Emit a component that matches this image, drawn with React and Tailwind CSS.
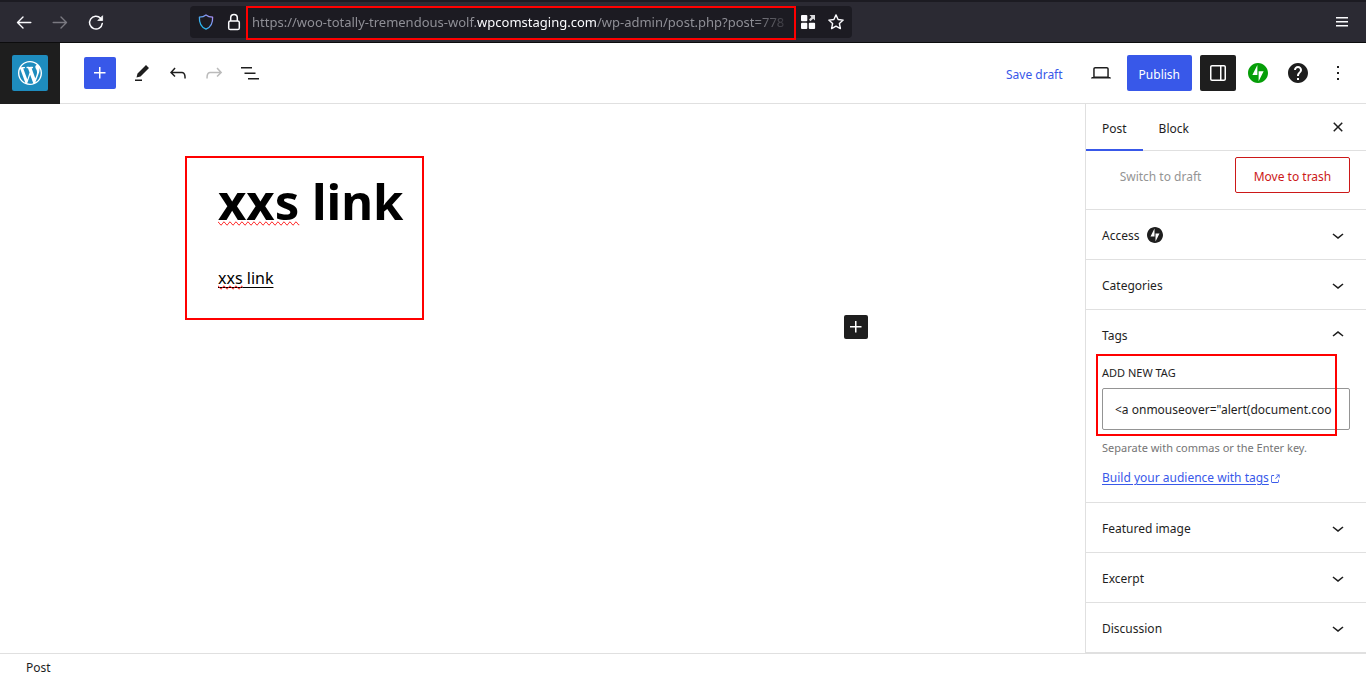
import React from "react";

const paths = {
  wordpress:
    "M20 10c0-5.51-4.49-10-10-10C4.48 0 0 4.49 0 10c0 5.52 4.48 10 10 10 5.51 0 10-4.48 10-10zM7.78 15.37L4.37 6.22c.55-.02 1.17-.08 1.17-.08.5-.06.44-1.13-.06-1.11 0 0-1.45.11-2.37.11-.18 0-.37 0-.58-.01C4.12 2.69 6.87 1.11 10 1.11c2.33 0 4.45.87 6.05 2.34-.68-.11-1.65.39-1.65 1.58 0 .74.45 1.36.9 2.1.35.61.55 1.36.55 2.46 0 1.49-1.4 5-1.4 5l-3.03-8.37c.54-.02.82-.17.82-.17.5-.05.44-1.25-.06-1.22 0 0-1.44.12-2.38.12-.87 0-2.33-.12-2.33-.12-.5-.03-.56 1.2-.06 1.22l.92.08 1.26 3.41zM17.41 10c.24-.64.74-1.87.43-4.25.7 1.29 1.05 2.71 1.05 4.25 0 3.29-1.73 6.24-4.4 7.78.97-2.59 1.94-5.2 2.92-7.78zM6.1 18.09C3.12 16.65 1.11 13.53 1.11 10c0-1.3.23-2.48.72-3.59C3.25 10.3 4.67 14.2 6.1 18.09zm4.03-6.63l2.58 6.98c-.86.29-1.76.45-2.71.45-.79 0-1.57-.11-2.29-.33.81-2.38 1.62-4.74 2.42-7.1z",
  plus: "M11 12.5V17.5H12.5V12.5H17.5V11H12.5V6H11V11H6V12.5H11Z",
  edit: "m19 7-3-3-8.5 8.5-1 4 4-1L19 7Zm-7 11.5H5V20h7v-1.5Z",
  undo: "M18.3 11.7c-.6-.6-1.4-.9-2.3-.9H6.7l2.9-3.3-1.1-1-4.5 5L8.5 16l1-1-2.7-2.7H16c.5 0 .9.2 1.3.5 1 1 1 3.4 1 4.5v.3h1.5v-.2c0-1.5 0-4.3-1.5-5.7z",
  redo: "M15.6 6.5l-1.1 1 2.9 3.3H8c-.9 0-1.7.3-2.3.9-1.4 1.5-1.4 4.2-1.4 5.6v.2h1.5v-.3c0-1.1 0-3.5 1-4.5.3-.3.7-.5 1.3-.5h9.2L14.5 15l1.1 1.1 4.6-4.6-4.6-5z",
  list: "M3 6h11v1.5H3V6Zm3.5 5.5h11V13h-11v-1.5ZM21 17H10v1.5h11V17Z",
  desktop:
    "M20.5 16h-.7V8c0-1.1-.9-2-2-2H6.2c-1.1 0-2 .9-2 2v8h-.7c-.8 0-1.5.7-1.5 1.5h20c0-.8-.7-1.5-1.5-1.5zM5.7 8c0-.3.2-.5.5-.5h11.6c.3 0 .5.2.5.5v7.6H5.7V8z",
  drawer:
    "M18 4H6c-1.1 0-2 .9-2 2v12c0 1.1.9 2 2 2h12c1.1 0 2-.9 2-2V6c0-1.1-.9-2-2-2zm-4 14.5H6c-.3 0-.5-.2-.5-.5V6c0-.3.2-.5.5-.5h8v13zm4.5-.5c0 .3-.2.5-.5.5h-2.5v-13H18c.3 0 .5.2.5.5v12z",
  help: "M12 2C6.48 2 2 6.48 2 12s4.48 10 10 10 10-4.48 10-10S17.52 2 12 2zm1 17h-2v-2h2v2zm2.07-7.75l-.9.92C13.45 12.9 13 13.5 13 15h-2v-.5c0-1.1.45-2.1 1.17-2.83l1.24-1.26c.37-.36.59-.86.59-1.41 0-1.1-.9-2-2-2s-2 .9-2 2H8c0-2.21 1.79-4 4-4s4 1.79 4 4c0 .88-.36 1.68-.93 2.25z",
  more: "M13 19h-2v-2h2v2zm0-6h-2v-2h2v2zm0-6h-2V5h2v2z",
  down: "M17.5 11.6L12 16l-5.5-4.4.9-1.2L12 14l4.5-3.6 1 1.2z",
  up: "M6.5 12.4L12 8l5.5 4.4-.9 1.2L12 10l-4.5 3.6-1-1.2z",
  close:
    "M12 13.06l3.712 3.713 1.061-1.06L13.061 12l3.712-3.712-1.06-1.06L12 10.938 8.288 7.227l-1.061 1.06L10.939 12l-3.712 3.712 1.06 1.061L12 13.061z",
  external:
    "M18.2 17c0 .7-.6 1.2-1.2 1.2H7c-.7 0-1.2-.6-1.2-1.2V7c0-.7.6-1.2 1.2-1.2h3.2V4.2H7C5.5 4.2 4.2 5.5 4.2 7v10c0 1.5 1.2 2.8 2.8 2.8h10c1.5 0 2.8-1.2 2.8-2.8v-3.6h-1.5V17zM14.9 3v1.5h3.7l-6.4 6.4 1.1 1.1 6.4-6.4v3.7h1.5V3h-6.3z",
};

function Icon({ name, className = "size-6" }) {
  return (
    <svg viewBox="0 0 24 24" fill="currentColor" className={className} aria-hidden="true">
      <path d={paths[name]} />
    </svg>
  );
}

function Jetpack({ className }) {
  return (
    <svg viewBox="0 0 32 32" fill="currentColor" className={className} aria-hidden="true">
      <path d="M16,0C7.2,0,0,7.2,0,16s7.2,16,16,16s16-7.2,16-16S24.8,0,16,0z M15,19H7l8-16V19z M17,29V13h8L17,29z" />
    </svg>
  );
}

function IconButton({ label, className = "", children }) {
  return (
    <button type="button" aria-label={label} className={`flex size-9 shrink-0 items-center justify-center rounded-xs ${className}`}>
      {children}
    </button>
  );
}

function BrowserBar() {
  return (
    <div className="flex h-[43px] shrink-0 items-center border-t-2 border-b border-t-[#1c1b22] border-b-[#0c0c0d] bg-[#2b2a33] pr-3 pl-3 text-[#fbfbfe]">
      <div className="flex items-center gap-3">
        <button type="button" aria-label="Back" className="flex size-6 items-center justify-center">
          <svg viewBox="0 0 16 16" className="size-4" fill="none" stroke="currentColor" strokeWidth="1.4" strokeLinecap="round" strokeLinejoin="round"><path d="M14.8 8.5H1.5M7 3L1.5 8.5L7 14" /></svg>
        </button>
        <button type="button" aria-label="Forward" className="flex size-6 items-center justify-center text-[#7a7981]">
          <svg viewBox="0 0 16 16" className="size-4" fill="none" stroke="currentColor" strokeWidth="1.4" strokeLinecap="round" strokeLinejoin="round"><path d="M1.2 8.5H14.5M9 3L14.5 8.5L9 14" /></svg>
        </button>
        <button type="button" aria-label="Reload" className="flex size-6 items-center justify-center">
          <svg viewBox="0 0 16 16" className="size-4 overflow-visible" fill="none" stroke="currentColor" strokeWidth="1.5" strokeLinecap="round"><path d="M14.3 9.4A6.4 6.4 0 1 1 12.6 4.2" /><path d="M14.6 2.1V6.5H10.2Z" fill="currentColor" strokeWidth="0.8" strokeLinejoin="round" /></svg>
        </button>
      </div>
      <div className="ml-[82px] flex h-8 w-[662px] items-center rounded bg-[#1c1b22] pl-2">
        <svg viewBox="0 0 16 16" className="size-4 shrink-0" fill="none" strokeWidth="1.3" strokeLinejoin="round">
          <defs>
            <linearGradient id="shield" x1="0" y1="1" x2="1" y2="0">
              <stop offset="0" stopColor="#00c8f0" />
              <stop offset="0.5" stopColor="#5fa0ee" />
              <stop offset="1" stopColor="#b58cf5" />
            </linearGradient>
          </defs>
          <path d="M8 0.9C6.4 2.2 3.8 3 1.4 3.1C1.1 8.5 2.6 13 8 15.2C13.4 13 14.9 8.5 14.6 3.1C12.2 3 9.6 2.2 8 0.9Z" stroke="url(#shield)" />
        </svg>
        <svg viewBox="0 0 16 18" className="ml-3 h-[18px] w-4 shrink-0" fill="none" stroke="currentColor" strokeWidth="1.5">
          <rect x="2.7" y="8" width="10.6" height="8.6" rx="1.6" />
          <path d="M4.7 8V4.8a3.3 3.3 0 0 1 6.6 0V8" />
        </svg>
        <div className="ml-1 flex h-[34px] w-[550px] shrink-0 items-center self-start overflow-hidden border-2 border-[#ff0000] bg-[#1c1b22] pl-1">
          <div role="textbox" aria-label="Address" className="w-[542px] font-['Noto_Sans','Open_Sans',sans-serif] text-[13px] whitespace-nowrap text-[#8f8f96] mask-[linear-gradient(to_right,black_500px,transparent_544px)]">
            https://woo-totally-tremendous-wolf.<span className="text-[#fbfbfe]">wpcomstaging.com</span>/wp-admin/post.php?post=778
          </div>
        </div>
        <button type="button" aria-label="Page actions" className="ml-1 flex size-4 items-center justify-center">
          <svg viewBox="0 0 16 16" className="size-4" fill="currentColor">
            <rect x="1" y="1" width="6.3" height="6.2" rx="1" />
            <rect x="1" y="8.8" width="6.3" height="6.2" rx="1" />
            <rect x="8.8" y="8.8" width="6.3" height="6.2" rx="1" />
            <path d="M9.5 1H15V6.5L13.2 4.7L10.4 7.2L9 5.8L11.4 2.9Z" opacity="0.85" />
          </svg>
        </button>
        <button type="button" aria-label="Bookmark" className="ml-3 flex size-4 items-center justify-center">
          <svg viewBox="0 0 16 16" className="size-4 overflow-visible" fill="none" stroke="currentColor" strokeWidth="1.4" strokeLinejoin="round"><path d="M8 0.9L10.1 5.5L15.2 6.1L11.4 9.5L12.4 14.6L8 12.1L3.6 14.6L4.6 9.5L0.8 6.1L5.9 5.5Z" /></svg>
        </button>
      </div>
      <button type="button" aria-label="Menu" className="ml-auto flex h-6 items-center">
        <svg viewBox="0 0 24 12" className="h-3 w-6" fill="currentColor"><path d="M6 1h12v1.4H6zM6 5h12v1.4H6zM6 9h12v1.4H6z" /></svg>
      </button>
    </div>
  );
}

function EditorHeader() {
  return (
    <header className="flex h-[61px] shrink-0 items-center border-b border-[#e0e0e0]">
      <a href="#posts" aria-label="View posts" className="-mb-px flex h-[61px] w-[60px] shrink-0 items-center justify-center bg-[#1e1e1e] pb-[2px]">
        <span className="flex size-9 items-center justify-center rounded-xs bg-[#1e8cbe] text-white">
          <svg viewBox="0 0 20 20" fill="currentColor" className="size-6"><path d={paths.wordpress} /></svg>
        </span>
      </a>
      <div className="flex items-center pl-6">
        <button type="button" aria-label="Add block" className="mr-2 flex size-8 items-center justify-center rounded-xs bg-[#3858e9] text-white"><Icon name="plus" /></button>
        <IconButton label="Tools"><Icon name="edit" /></IconButton>
        <IconButton label="Undo"><Icon name="undo" /></IconButton>
        <IconButton label="Redo" className="text-[#bbbbbb]"><Icon name="redo" /></IconButton>
        <IconButton label="Document overview"><Icon name="list" /></IconButton>
      </div>
      <div className="ml-auto flex items-center gap-1 pr-[10px]">
        <button type="button" className="mr-1 h-9 px-3 pt-1 text-[#3858e9]">Save draft</button>
        <IconButton label="View" className="mr-1"><Icon name="desktop" /></IconButton>
        <button type="button" className="mr-1 h-9 rounded-xs bg-[#3858e9] px-3 pt-1 text-white">Publish</button>
        <IconButton label="Settings" className="bg-[#1e1e1e] text-white"><Icon name="drawer" /></IconButton>
        <IconButton label="Jetpack" className="text-[#069e08]"><Jetpack className="size-5" /></IconButton>
        <IconButton label="Help"><Icon name="help" /></IconButton>
        <IconButton label="Options"><Icon name="more" /></IconButton>
      </div>
    </header>
  );
}

function Panel({ title, open = false, badge, children }) {
  return (
    <section className="border-b border-[#e0e0e0]">
      <h2>
        <button type="button" aria-expanded={open} className="flex h-[49px] w-full items-center px-4">
          <span className="pt-[2px]">{title}</span>
          {badge}
          <Icon name={open ? "up" : "down"} className="ml-auto size-6" />
        </button>
      </h2>
      {children}
    </section>
  );
}

function Sidebar() {
  return (
    <aside className="w-[281px] shrink-0 border-l border-[#e0e0e0]">
      <div className="flex h-[47px] items-stretch border-b border-[#e0e0e0]">
        <button type="button" className="-mb-px border-b-2 border-[#3858e9] px-4 pt-1">Post</button>
        <button type="button" className="-mb-px border-b-2 border-transparent px-4 pt-1">Block</button>
        <button type="button" aria-label="Close settings" className="mr-4 ml-auto flex items-center"><Icon name="close" /></button>
      </div>
      <div className="flex gap-4 border-b border-[#e0e0e0] px-4 pt-[6px] pb-4">
        <button type="button" disabled className="h-9 flex-1 pt-1 text-[#949494]">Switch to draft</button>
        <button type="button" className="h-9 w-[115px] rounded-xs border border-[#cc1818] pt-1 text-[#cc1818]">Move to trash</button>
      </div>
      <Panel title="Access" badge={<Jetpack className="ml-2 size-4" />} />
      <Panel title="Categories" />
      <Panel title="Tags" open>
        <div className="relative px-4 pt-1 pb-[14px]">
          <label htmlFor="new-tag" className="block h-[25px] pt-[2px] text-[11px] leading-4 uppercase">Add new tag</label>
          <input
            id="new-tag"
            type="text"
            defaultValue={'<a onmouseover="alert(document.coo'}
            className="block h-[42px] w-full rounded-xs border border-[#949494] pr-2 pl-3"
          />
          <p className="pt-[10px] text-[11px] leading-4 text-[#757575]">Separate with commas or the Enter key.</p>
          <a href="#tags" className="mt-3 flex items-center leading-5 text-[#3858e9]">
            <span className="underline underline-offset-2">Build your audience with tags</span>
            <Icon name="external" className="mt-[2px] size-3" />
          </a>
          <div className="pointer-events-none absolute -top-[5px] left-[10px] h-[82px] w-[241px] border-2 border-[#ff0000]" />
        </div>
      </Panel>
      <Panel title="Featured image" />
      <Panel title="Excerpt" />
      <Panel title="Discussion" />
    </aside>
  );
}

export default function App() {
  return (
    <div className="flex min-h-screen flex-col bg-white font-['Noto_Sans','Open_Sans',sans-serif] text-[12px] text-[#1e1e1e]">
      <BrowserBar />
      <EditorHeader />
      <div className="flex flex-1">
        <main className="min-w-0 flex-1 pt-[52px] text-black">
          <div className="ml-[185px] h-[164px] w-[239px] border-2 border-[#ff0000] px-[31px] whitespace-nowrap">
            <h1 className="pt-2 text-[49px] leading-[70px] font-bold">
              <span className="[text-decoration-line:spelling-error]">xxs</span> link
            </h1>
            <p className="pt-7 text-[16px] leading-[28px]">
              <a href="#xxs" className="underline underline-offset-3">
                <span className="[text-decoration-line:spelling-error]">xxs</span> link
              </a>
            </p>
          </div>
          <div className="mr-[217px] -mt-[5px] flex justify-end">
            <button type="button" aria-label="Add block" className="flex size-6 items-center justify-center rounded-xs bg-[#1e1e1e] text-white"><Icon name="plus" /></button>
          </div>
        </main>
        <Sidebar />
      </div>
      <footer className="h-[22px] shrink-0 border-t border-[#e0e0e0] pl-[26px] leading-[27px]">Post</footer>
    </div>
  );
}
